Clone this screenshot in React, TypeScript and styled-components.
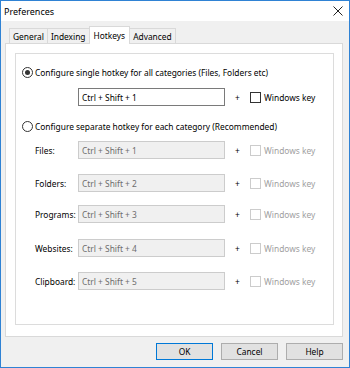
import React from "react";
import styled, { createGlobalStyle, css } from "styled-components";

const Global = createGlobalStyle`
  html, body { margin: 0; padding: 0; background: #ffffff; }
  body { font-family: "Noto Sans", "DejaVu Sans", sans-serif; font-size: 8.4px; color: #000; }
  * { box-sizing: border-box; }
`;

const Window = styled.div`
  width: 350px;
  height: 368px;
  border: 1px solid #2f82d4;
  background: #f0f0f0;
  display: flex;
  flex-direction: column;
`;

const TitleBar = styled.div`
  height: 20px;
  background: #ffffff;
  display: flex;
  align-items: center;
  justify-content: space-between;
  padding: 0 6px 0 3px;
  font-size: 9px;
`;

const Body = styled.div`
  flex: 1;
  display: flex;
  flex-direction: column;
  padding: 5px 6px 0 4px;
`;

const TabStrip = styled.div`
  display: flex;
  align-items: flex-end;
  height: 17px;
  padding-left: 4px;
  position: relative;
  z-index: 1;
`;

const Tab = styled.div<{ $active?: boolean }>`
  height: 15px;
  display: flex;
  align-items: center;
  padding: 0 3px;
  border: 1px solid #d9d9d9;
  border-bottom: none;
  background: #f0f0f0;
  margin-right: -1px;
  white-space: nowrap;
  ${(p) =>
    p.$active &&
    css`
      height: 18px;
      margin-bottom: -1px;
      background: #ffffff;
      padding: 0 4px 1px;
    `}
`;

const Panel = styled.div`
  height: 294px;
  background: #ffffff;
  border: 1px solid #d9d9d9;
  padding: 9px 8px 11px 9px;
`;

const Group = styled.div`
  height: 272px;
  border: 1px solid #dcdcdc;
  display: flex;
  flex-direction: column;
`;

const OptionRow = styled.div<{ $top: number }>`
  display: flex;
  align-items: center;
  height: 11px;
  margin-top: ${(p) => p.$top}px;
  padding-left: 6px;
  gap: 2px;
  white-space: nowrap;
`;

const Radio = styled.span<{ $checked?: boolean }>`
  width: 11px;
  height: 11px;
  border-radius: 50%;
  border: 1px solid #333;
  display: flex;
  align-items: center;
  justify-content: center;
  flex: none;
  &::after {
    content: "";
    width: 5px;
    height: 5px;
    border-radius: 50%;
    background: ${(p) => (p.$checked ? "#333" : "transparent")};
  }
`;

const KeyRow = styled.div<{ $top: number; $indent?: number }>`
  display: flex;
  align-items: center;
  height: 18px;
  margin-top: ${(p) => p.$top}px;
  padding-left: ${(p) => p.$indent ?? 19}px;
`;

const Label = styled.span`
  width: 43px;
  flex: none;
  color: #000;
`;

const Field = styled.div<{ $disabled?: boolean }>`
  width: 147px;
  height: 18px;
  flex: none;
  display: flex;
  align-items: center;
  padding-left: 3px;
  border: 1px solid ${(p) => (p.$disabled ? "#cccccc" : "#7a7a7a")};
  background: ${(p) => (p.$disabled ? "#f0f0f0" : "#ffffff")};
  color: ${(p) => (p.$disabled ? "#6d6d6d" : "#000")};
  white-space: nowrap;
`;

const Plus = styled.span`
  margin-left: 10px;
  width: 15px;
  flex: none;
`;

const Check = styled.span<{ $disabled?: boolean }>`
  width: 11px;
  height: 11px;
  flex: none;
  border: 1px solid ${(p) => (p.$disabled ? "#cccccc" : "#333333")};
  background: #fff;
`;

const CheckText = styled.span<{ $disabled?: boolean }>`
  margin-left: 3px;
  color: ${(p) => (p.$disabled ? "#a0a0a0" : "#000")};
  white-space: nowrap;
`;

const Footer = styled.div`
  display: flex;
  justify-content: flex-end;
  gap: 8px;
  margin-top: 6px;
`;

const Button = styled.div<{ $default?: boolean }>`
  width: 57px;
  height: 17px;
  display: flex;
  align-items: center;
  justify-content: center;
  background: #e1e1e1;
  border: 1px solid ${(p) => (p.$default ? "#0078d7" : "#adadad")};
`;

const rows = [
  { label: "Files:", key: "1", top: 9 },
  { label: "Folders:", key: "2", top: 15 },
  { label: "Programs:", key: "3", top: 13 },
  { label: "Websites:", key: "4", top: 16 },
  { label: "Clipboard:", key: "5", top: 15 },
];

export default function App() {
  return (
    <>
      <Global />
      <Window>
        <TitleBar>
          <span>Preferences</span>
          <svg width="10" height="10" viewBox="0 0 10 10">
            <path d="M0.5 0.5 L9.5 9.5 M9.5 0.5 L0.5 9.5" stroke="#222" strokeWidth="1" />
          </svg>
        </TitleBar>
        <Body>
          <TabStrip>
            <Tab>General</Tab>
            <Tab>Indexing</Tab>
            <Tab $active>Hotkeys</Tab>
            <Tab>Advanced</Tab>
          </TabStrip>
          <Panel>
            <Group>
              <OptionRow $top={13}>
                <Radio $checked />
                <span>Configure single hotkey for all categories (Files, Folders etc)</span>
              </OptionRow>
              <KeyRow $top={10} $indent={62}>
                <Field>Ctrl + Shift + 1</Field>
                <Plus>+</Plus>
                <Check />
                <CheckText>Windows key</CheckText>
              </KeyRow>
              <OptionRow $top={15}>
                <Radio />
                <span>Configure separate hotkey for each category (Recommended)</span>
              </OptionRow>
              {rows.map((r) => (
                <KeyRow key={r.key} $top={r.top}>
                  <Label>{r.label}</Label>
                  <Field $disabled>Ctrl + Shift + {r.key}</Field>
                  <Plus>+</Plus>
                  <Check $disabled />
                  <CheckText $disabled>Windows key</CheckText>
                </KeyRow>
              ))}
            </Group>
          </Panel>
          <Footer>
            <Button $default>OK</Button>
            <Button>Cancel</Button>
            <Button>Help</Button>
          </Footer>
        </Body>
      </Window>
    </>
  );
}
